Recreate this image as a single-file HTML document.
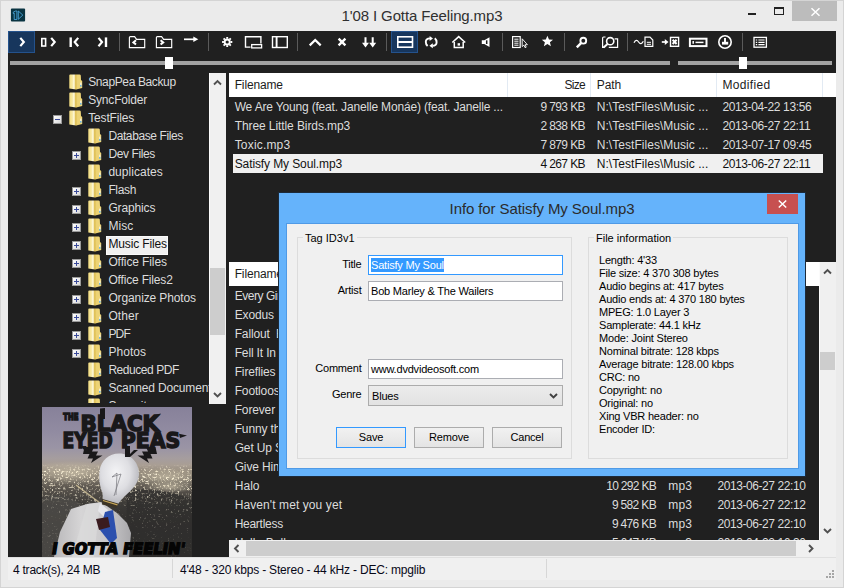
<!DOCTYPE html><html><head><meta charset="utf-8"><title>1'08 I Gotta Feeling.mp3</title><style>
*{box-sizing:border-box;margin:0;padding:0}
html,body{width:844px;height:588px;overflow:hidden;background:#ebebeb}
body{position:relative;font-family:"Liberation Sans",sans-serif;font-size:12px;color:#dcdcdc}
.abs{position:absolute}
#frame{position:absolute;left:0;top:0;width:844px;height:588px;border:1px solid #d4d4d4;background:#ebebeb}
#title{position:absolute;left:0;top:6px;width:844px;text-align:center;font-size:15px;color:#303030;letter-spacing:-0.12px;line-height:20px;white-space:pre}
#client{position:absolute;left:8px;top:31px;width:828px;height:526px;background:#202020}
.t{position:absolute;white-space:pre;line-height:16px;letter-spacing:-0.47px}
.sep{position:absolute;top:33px;width:1px;height:18px;background:#5a5a5a}
.ic{position:absolute}
.row{position:absolute;left:0;height:19px}
.hdr{position:absolute;background:#fff;color:#1a1a1a}
.hdr .t{color:#1e1e1e}
.ms{font-family:"Liberation Sans",sans-serif;font-size:11px;color:#000;letter-spacing:-0.2px}
</style></head><body>
<div id="frame"></div>
<svg class="abs" style="left:0;top:0" width="32" height="28" viewBox="0 0 32 28"><rect x="10.900" y="8.500" width="14.200" height="12.900" rx="1" fill="#0a3442"/><path d="M13.200 12.200 L15.600 11 H16.900 V19.500 H14.200 V13.100 L13.300 13.500 Z" stroke="#4fb0ea" stroke-width=".8" fill="none"/><path d="M18.300 11 L22.800 15.100 L18.300 19.300 Z" stroke="#4fb0ea" stroke-width=".8" fill="none"/></svg>
<div id="title">1'08 I Gotta Feeling.mp3</div>
<div class="abs" style="left:748px;top:13px;width:8px;height:2px;background:#222"></div>
<div class="abs" style="left:774px;top:7px;width:10px;height:8px;border:1px solid #222;border-top-width:2px"></div>
<div class="abs" style="left:792px;top:1px;width:45px;height:20px;background:#bcbcbc"></div>
<svg class="abs" style="left:809.500px;top:6.700px" width="11" height="10" viewBox="0 0 11 10"><path d="M1.500 1.200 L9.500 8.800 M9.500 1.200 L1.500 8.800" stroke="#fff" stroke-width="1.500" fill="none"/></svg>
<div id="client"></div>
<svg class="abs" width="0" height="0" style="left:0;top:0"><defs><linearGradient id="fg" x1="0" x2="1"><stop offset="0" stop-color="#f2dc80"/><stop offset=".24" stop-color="#f8eaa6"/><stop offset=".37" stop-color="#fffbe4"/><stop offset=".47" stop-color="#e2c45c"/><stop offset=".62" stop-color="#ecd273"/><stop offset="1" stop-color="#efd679"/></linearGradient></defs></svg>
<div class="abs" style="left:8px;top:31px;width:27px;height:22px;background:#17365d;border:1px solid #24528c"></div>
<div class="abs" style="left:391px;top:31px;width:27px;height:22px;background:#17365d;border:1px solid #24528c"></div>
<div class="sep" style="left:119.2px"></div>
<div class="sep" style="left:208px"></div>
<div class="sep" style="left:297px"></div>
<div class="sep" style="left:386px"></div>
<div class="sep" style="left:502.3px"></div>
<div class="sep" style="left:564px"></div>
<div class="sep" style="left:626.5px"></div>
<div class="sep" style="left:742px"></div>
<svg class="abs" style="left:0;top:28px" width="844" height="28" viewBox="0 28 844 28" fill="none" stroke="#fff"><path d="M20.300 37.900 L23.800 42 L20.300 46.100" stroke-width="2.200"/><rect x="41.800" y="38.600" width="3.800" height="7.400" stroke-width="1.600"/><path d="M51.200 37.900 L54.700 42 L51.200 46.100" stroke-width="2.200"/><path d="M70.700 37.400 V47" stroke-width="2.400"/><path d="M78.200 37.900 L74.700 42.100 L78.200 46.300" stroke-width="2.200"/><path d="M106 37.400 V47" stroke-width="2.400"/><path d="M98.500 37.900 L102 42.100 L98.500 46.300" stroke-width="2.200"/><g transform="translate(0 0)"><path d="M129.400 47.600 V37.600 Q129.400 36.600 130.400 36.600 H134.600 L136.600 39.300 H144.700 V47.600 Z" stroke-width="1.150"/><path d="M136 40.300 L133.400 42.400 L136 44.500" stroke-width="2"/></g><g transform="translate(27 0)"><path d="M129.400 47.600 V37.600 Q129.400 36.600 130.400 36.600 H134.600 L136.600 39.300 H144.700 V47.600 Z" stroke-width="1.150"/><path d="M133.600 40.300 L136.200 42.400 L133.600 44.500" stroke-width="2"/></g><path d="M184 39.300 H194.500" stroke-width="1.700"/><path d="M193.300 36.600 L198.300 39.300 L193.300 42 Z" fill="#fff" stroke="none"/><circle cx="227.200" cy="42" r="2.550" stroke-width="1.900"/><g stroke-width="1.900"><path d="M227.200 36.900V38.700M227.200 45.300V47.100M222.100 42H223.900M230.500 42H232.300M223.600 38.400L224.900 39.700M229.500 44.300L230.800 45.600M230.800 38.400L229.500 39.700M223.600 45.600L224.900 44.300"/></g><path d="M250.500 47.100 H245.500 V36.700 H260.900 V43.500" stroke-width="1.400"/><rect x="251.700" y="44.600" width="9.900" height="3.300" stroke-width="1.300"/><rect x="272.500" y="36.700" width="14.800" height="10.800" stroke-width="1.400"/><path d="M276.600 36.700 V47.500" stroke-width="1.900"/><path d="M309.700 45.400 L315.200 40 L320.700 45.400" stroke-width="2.200"/><path d="M338.600 38.600 L345.400 45.300 M345.400 38.600 L338.600 45.300" stroke-width="2.400"/><path d="M365.500 37.200 V45 M372.700 37.200 V45" stroke-width="2"/><path d="M362 42.800 L365.500 47.500 L369 42.800 Z M369.200 42.800 L372.700 47.500 L376.200 42.800 Z" fill="#fff" stroke="none"/><rect x="397.800" y="36.800" width="14.700" height="10.400" stroke-width="1.600"/><path d="M397.800 42 H412.500" stroke-width="2"/><path d="M427.600 46 Q425.800 44.500 425.800 42 Q425.800 38.500 430 38.400" stroke-width="1.900"/><path d="M429.600 36 L433 38.500 L429.600 41 Z" fill="#fff" stroke="none"/><path d="M434.800 38.200 Q436.600 39.700 436.600 42.200 Q436.600 45.700 432.400 45.800" stroke-width="1.900"/><path d="M432.800 43.200 L429.400 45.700 L432.800 48.200 Z" fill="#fff" stroke="none"/><path d="M452.300 42.500 L458.700 36.700 L465.200 42.500" stroke-width="1.600"/><path d="M454.300 42 V47.500 H463.200 V42" stroke-width="1.500"/><rect x="457.600" y="43.200" width="2.400" height="2.400" fill="#fff" stroke="none"/><path d="M481.800 40.300 H484.300 L489.500 37.200 V47 L484.300 43.900 H481.800 Z" fill="#fff" stroke="none"/><path d="M486.700 40.300 V44" stroke="#202020" stroke-width="1.500"/><rect x="512.600" y="36.600" width="7.600" height="10.900" stroke-width="1.200"/><path d="M514.300 39.200H518.500M514.300 41.200H518.500M514.300 43.200H518.500M514.300 45.200H518.500" stroke-width="1"/><path d="M522.200 38.800 V46.600 L523.900 45.100 L525.100 47.700 L526.200 47.200 L525.100 44.700 H527.400 Z" fill="#202020" stroke-width="0.900"/><path d="M547.400 35.800 L549 39.500 L553 39.800 L549.900 42.300 L550.900 46.200 L547.400 44.100 L543.900 46.200 L544.900 42.300 L541.800 39.800 L545.800 39.500 Z" fill="#fff" stroke="none"/><circle cx="583.300" cy="40.700" r="2.900" stroke-width="1.900"/><path d="M581 43.200 L576.800 47.300" stroke-width="2.400"/><path d="M604.200 47.400 H602.600 V38 Q602.600 37 603.600 37 H605.500 M614.600 38.900 H617.600 V47.400 H608.800" stroke-width="1.200"/><circle cx="610.200" cy="41.200" r="3.600" stroke-width="1.600"/><path d="M607.500 44 L603.600 47.600" stroke-width="2"/><path d="M634 42.800 Q636.300 38.200 638.600 42 T643.300 41.200" stroke-width="1.200"/><path d="M645 46.400 V37.200 H650 L652.800 40 V46.400 Z" stroke-width="1.200"/><path d="M646.800 42.300H651M646.800 44.300H651" stroke-width="1"/><path d="M661.800 42 H666" stroke-width="1.700"/><path d="M664.800 38.900 L668.500 42 L664.800 45.100 Z" fill="#fff" stroke="none"/><rect x="670.500" y="37.400" width="8.100" height="8.900" stroke-width="1.400"/><path d="M672.600 39.700 L676.600 44 M676.600 39.700 L672.600 44" stroke-width="2"/><rect x="689.900" y="38.700" width="16.600" height="7.400" stroke-width="2"/><path d="M693.200 41 V43.800" stroke-width="1.500"/><path d="M695.500 42.400 H703.500" stroke-width="1.500"/><circle cx="725" cy="42" r="6.200" stroke-width="1.600"/><path d="M725 38 V43.500" stroke-width="1.900"/><path d="M722 41.800 H728.200 V44.600 H722 Z" fill="#fff" stroke="none"/><rect x="754" y="37.400" width="12.400" height="9.800" stroke-width="1.300"/><path d="M755.800 40H757.200M758.400 40H764.600M755.800 42.300H757.200M758.400 42.300H764.600M755.800 44.600H757.200M758.400 44.600H764.600" stroke-width="1.200"/></svg>
<div class="abs" style="left:10px;top:61px;width:660px;height:4px;background:#a2a2a2"></div>
<div class="abs" style="left:165px;top:57px;width:8px;height:12px;background:#fff"></div>
<div class="abs" style="left:678px;top:61px;width:154px;height:4px;background:#a2a2a2"></div>
<div class="abs" style="left:739px;top:57px;width:8px;height:12px;background:#fff"></div>
<div class="abs" style="left:8px;top:73px;width:201px;height:330px;overflow:hidden">
<svg class="ic" style="left:61px;top:1px" width="14" height="16" viewBox="0 0 14 16"><path d="M0.3 1.2 Q0.3 0.4 1.2 0.4 H10.5 Q11.6 0.4 11.8 1.5 L12 6 L13.2 7 V14 L7 15.6 L0.3 14.6 Z" fill="url(#fg)"/><path d="M7 1 L7.2 15.4" stroke="#d9b94f" stroke-width="0.8" opacity=".7"/><rect x="11.3" y="8.6" width="1.1" height="3.6" fill="#f7f7f7"/><rect x="11.3" y="11" width="1.1" height="1.7" fill="#3aa0e8"/></svg>
<div class="t" style="left:80.2px;top:1px;letter-spacing:-0.375px">SnapPea Backup</div>
<svg class="ic" style="left:61px;top:19px" width="14" height="16" viewBox="0 0 14 16"><path d="M0.3 1.2 Q0.3 0.4 1.2 0.4 H10.5 Q11.6 0.4 11.8 1.5 L12 6 L13.2 7 V14 L7 15.6 L0.3 14.6 Z" fill="url(#fg)"/><path d="M7 1 L7.2 15.4" stroke="#d9b94f" stroke-width="0.8" opacity=".7"/><rect x="11.3" y="8.6" width="1.1" height="3.6" fill="#f7f7f7"/><rect x="11.3" y="11" width="1.1" height="1.7" fill="#3aa0e8"/></svg>
<div class="t" style="left:80.2px;top:19px;letter-spacing:-0.17px">SyncFolder</div>
<svg class="ic" style="left:61px;top:37px" width="14" height="16" viewBox="0 0 14 16"><path d="M0.3 1.2 Q0.3 0.4 1.2 0.4 H10.5 Q11.6 0.4 11.8 1.5 L12 6 L13.2 7 V14 L7 15.6 L0.3 14.6 Z" fill="url(#fg)"/><path d="M7 1 L7.2 15.4" stroke="#d9b94f" stroke-width="0.8" opacity=".7"/><rect x="11.3" y="8.6" width="1.1" height="3.6" fill="#f7f7f7"/><rect x="11.3" y="11" width="1.1" height="1.7" fill="#3aa0e8"/></svg>
<div class="abs" style="left:45px;top:42px;width:9px;height:9px;background:linear-gradient(135deg,#fff,#d8d8d8);border:1px solid #9a9a9a"></div><div class="abs" style="left:47px;top:46px;width:5px;height:1px;background:#3a4a9a"></div>
<div class="t" style="left:80.2px;top:37px;letter-spacing:-0.16px">TestFiles</div>
<svg class="ic" style="left:80px;top:55px" width="14" height="16" viewBox="0 0 14 16"><path d="M0.3 1.2 Q0.3 0.4 1.2 0.4 H10.5 Q11.6 0.4 11.8 1.5 L12 6 L13.2 7 V14 L7 15.6 L0.3 14.6 Z" fill="url(#fg)"/><path d="M7 1 L7.2 15.4" stroke="#d9b94f" stroke-width="0.8" opacity=".7"/><rect x="11.3" y="8.6" width="1.1" height="3.6" fill="#f7f7f7"/><rect x="11.3" y="11" width="1.1" height="1.7" fill="#3aa0e8"/></svg>
<div class="t" style="left:100.4px;top:55px;letter-spacing:-0.403px">Database Files</div>
<svg class="ic" style="left:80px;top:73px" width="14" height="16" viewBox="0 0 14 16"><path d="M0.3 1.2 Q0.3 0.4 1.2 0.4 H10.5 Q11.6 0.4 11.8 1.5 L12 6 L13.2 7 V14 L7 15.6 L0.3 14.6 Z" fill="url(#fg)"/><path d="M7 1 L7.2 15.4" stroke="#d9b94f" stroke-width="0.8" opacity=".7"/><rect x="11.3" y="8.6" width="1.1" height="3.6" fill="#f7f7f7"/><rect x="11.3" y="11" width="1.1" height="1.7" fill="#3aa0e8"/></svg>
<div class="abs" style="left:64px;top:78px;width:9px;height:9px;background:linear-gradient(135deg,#fff,#d8d8d8);border:1px solid #9a9a9a"></div><div class="abs" style="left:66px;top:82px;width:5px;height:1px;background:#3a4a9a"></div><div class="abs" style="left:68px;top:80px;width:1px;height:5px;background:#3a4a9a"></div>
<div class="t" style="left:100.4px;top:73px;letter-spacing:-0.38px">Dev Files</div>
<svg class="ic" style="left:80px;top:91px" width="14" height="16" viewBox="0 0 14 16"><path d="M0.3 1.2 Q0.3 0.4 1.2 0.4 H10.5 Q11.6 0.4 11.8 1.5 L12 6 L13.2 7 V14 L7 15.6 L0.3 14.6 Z" fill="url(#fg)"/><path d="M7 1 L7.2 15.4" stroke="#d9b94f" stroke-width="0.8" opacity=".7"/><rect x="11.3" y="8.6" width="1.1" height="3.6" fill="#f7f7f7"/><rect x="11.3" y="11" width="1.1" height="1.7" fill="#3aa0e8"/></svg>
<div class="t" style="left:100.4px;top:91px;letter-spacing:0.045px">duplicates</div>
<svg class="ic" style="left:80px;top:109px" width="14" height="16" viewBox="0 0 14 16"><path d="M0.3 1.2 Q0.3 0.4 1.2 0.4 H10.5 Q11.6 0.4 11.8 1.5 L12 6 L13.2 7 V14 L7 15.6 L0.3 14.6 Z" fill="url(#fg)"/><path d="M7 1 L7.2 15.4" stroke="#d9b94f" stroke-width="0.8" opacity=".7"/><rect x="11.3" y="8.6" width="1.1" height="3.6" fill="#f7f7f7"/><rect x="11.3" y="11" width="1.1" height="1.7" fill="#3aa0e8"/></svg>
<div class="abs" style="left:64px;top:114px;width:9px;height:9px;background:linear-gradient(135deg,#fff,#d8d8d8);border:1px solid #9a9a9a"></div><div class="abs" style="left:66px;top:118px;width:5px;height:1px;background:#3a4a9a"></div><div class="abs" style="left:68px;top:116px;width:1px;height:5px;background:#3a4a9a"></div>
<div class="t" style="left:100.4px;top:109px;letter-spacing:-0.349px">Flash</div>
<svg class="ic" style="left:80px;top:127px" width="14" height="16" viewBox="0 0 14 16"><path d="M0.3 1.2 Q0.3 0.4 1.2 0.4 H10.5 Q11.6 0.4 11.8 1.5 L12 6 L13.2 7 V14 L7 15.6 L0.3 14.6 Z" fill="url(#fg)"/><path d="M7 1 L7.2 15.4" stroke="#d9b94f" stroke-width="0.8" opacity=".7"/><rect x="11.3" y="8.6" width="1.1" height="3.6" fill="#f7f7f7"/><rect x="11.3" y="11" width="1.1" height="1.7" fill="#3aa0e8"/></svg>
<div class="abs" style="left:64px;top:132px;width:9px;height:9px;background:linear-gradient(135deg,#fff,#d8d8d8);border:1px solid #9a9a9a"></div><div class="abs" style="left:66px;top:136px;width:5px;height:1px;background:#3a4a9a"></div><div class="abs" style="left:68px;top:134px;width:1px;height:5px;background:#3a4a9a"></div>
<div class="t" style="left:100.4px;top:127px;letter-spacing:-0.141px">Graphics</div>
<svg class="ic" style="left:80px;top:145px" width="14" height="16" viewBox="0 0 14 16"><path d="M0.3 1.2 Q0.3 0.4 1.2 0.4 H10.5 Q11.6 0.4 11.8 1.5 L12 6 L13.2 7 V14 L7 15.6 L0.3 14.6 Z" fill="url(#fg)"/><path d="M7 1 L7.2 15.4" stroke="#d9b94f" stroke-width="0.8" opacity=".7"/><rect x="11.3" y="8.6" width="1.1" height="3.6" fill="#f7f7f7"/><rect x="11.3" y="11" width="1.1" height="1.7" fill="#3aa0e8"/></svg>
<div class="abs" style="left:64px;top:150px;width:9px;height:9px;background:linear-gradient(135deg,#fff,#d8d8d8);border:1px solid #9a9a9a"></div><div class="abs" style="left:66px;top:154px;width:5px;height:1px;background:#3a4a9a"></div><div class="abs" style="left:68px;top:152px;width:1px;height:5px;background:#3a4a9a"></div>
<div class="t" style="left:100.4px;top:145px;letter-spacing:0.107px">Misc</div>
<svg class="ic" style="left:80px;top:163px" width="14" height="16" viewBox="0 0 14 16"><path d="M0.3 1.2 Q0.3 0.4 1.2 0.4 H10.5 Q11.6 0.4 11.8 1.5 L12 6 L13.2 7 V14 L7 15.6 L0.3 14.6 Z" fill="url(#fg)"/><path d="M7 1 L7.2 15.4" stroke="#d9b94f" stroke-width="0.8" opacity=".7"/><rect x="11.3" y="8.6" width="1.1" height="3.6" fill="#f7f7f7"/><rect x="11.3" y="11" width="1.1" height="1.7" fill="#3aa0e8"/></svg>
<div class="abs" style="left:64px;top:168px;width:9px;height:9px;background:linear-gradient(135deg,#fff,#d8d8d8);border:1px solid #9a9a9a"></div><div class="abs" style="left:66px;top:172px;width:5px;height:1px;background:#3a4a9a"></div><div class="abs" style="left:68px;top:170px;width:1px;height:5px;background:#3a4a9a"></div>
<div class="abs" style="left:98px;top:163.4px;width:62px;height:18.500px;background:#f0f0f0;border:1px solid #fafafa"></div>
<div class="t" style="left:100.4px;top:163px;color:#101010;letter-spacing:-0.138px">Music Files</div>
<svg class="ic" style="left:80px;top:181px" width="14" height="16" viewBox="0 0 14 16"><path d="M0.3 1.2 Q0.3 0.4 1.2 0.4 H10.5 Q11.6 0.4 11.8 1.5 L12 6 L13.2 7 V14 L7 15.6 L0.3 14.6 Z" fill="url(#fg)"/><path d="M7 1 L7.2 15.4" stroke="#d9b94f" stroke-width="0.8" opacity=".7"/><rect x="11.3" y="8.6" width="1.1" height="3.6" fill="#f7f7f7"/><rect x="11.3" y="11" width="1.1" height="1.7" fill="#3aa0e8"/></svg>
<div class="abs" style="left:64px;top:186px;width:9px;height:9px;background:linear-gradient(135deg,#fff,#d8d8d8);border:1px solid #9a9a9a"></div><div class="abs" style="left:66px;top:190px;width:5px;height:1px;background:#3a4a9a"></div><div class="abs" style="left:68px;top:188px;width:1px;height:5px;background:#3a4a9a"></div>
<div class="t" style="left:100.4px;top:181px;letter-spacing:-0.108px">Office Files</div>
<svg class="ic" style="left:80px;top:199px" width="14" height="16" viewBox="0 0 14 16"><path d="M0.3 1.2 Q0.3 0.4 1.2 0.4 H10.5 Q11.6 0.4 11.8 1.5 L12 6 L13.2 7 V14 L7 15.6 L0.3 14.6 Z" fill="url(#fg)"/><path d="M7 1 L7.2 15.4" stroke="#d9b94f" stroke-width="0.8" opacity=".7"/><rect x="11.3" y="8.6" width="1.1" height="3.6" fill="#f7f7f7"/><rect x="11.3" y="11" width="1.1" height="1.7" fill="#3aa0e8"/></svg>
<div class="abs" style="left:64px;top:204px;width:9px;height:9px;background:linear-gradient(135deg,#fff,#d8d8d8);border:1px solid #9a9a9a"></div><div class="abs" style="left:66px;top:208px;width:5px;height:1px;background:#3a4a9a"></div><div class="abs" style="left:68px;top:206px;width:1px;height:5px;background:#3a4a9a"></div>
<div class="t" style="left:100.4px;top:199px;letter-spacing:-0.167px">Office Files2</div>
<svg class="ic" style="left:80px;top:217px" width="14" height="16" viewBox="0 0 14 16"><path d="M0.3 1.2 Q0.3 0.4 1.2 0.4 H10.5 Q11.6 0.4 11.8 1.5 L12 6 L13.2 7 V14 L7 15.6 L0.3 14.6 Z" fill="url(#fg)"/><path d="M7 1 L7.2 15.4" stroke="#d9b94f" stroke-width="0.8" opacity=".7"/><rect x="11.3" y="8.6" width="1.1" height="3.6" fill="#f7f7f7"/><rect x="11.3" y="11" width="1.1" height="1.7" fill="#3aa0e8"/></svg>
<div class="abs" style="left:64px;top:222px;width:9px;height:9px;background:linear-gradient(135deg,#fff,#d8d8d8);border:1px solid #9a9a9a"></div><div class="abs" style="left:66px;top:226px;width:5px;height:1px;background:#3a4a9a"></div><div class="abs" style="left:68px;top:224px;width:1px;height:5px;background:#3a4a9a"></div>
<div class="t" style="left:100.4px;top:217px;letter-spacing:-0.119px">Organize Photos</div>
<svg class="ic" style="left:80px;top:235px" width="14" height="16" viewBox="0 0 14 16"><path d="M0.3 1.2 Q0.3 0.4 1.2 0.4 H10.5 Q11.6 0.4 11.8 1.5 L12 6 L13.2 7 V14 L7 15.6 L0.3 14.6 Z" fill="url(#fg)"/><path d="M7 1 L7.2 15.4" stroke="#d9b94f" stroke-width="0.8" opacity=".7"/><rect x="11.3" y="8.6" width="1.1" height="3.6" fill="#f7f7f7"/><rect x="11.3" y="11" width="1.1" height="1.7" fill="#3aa0e8"/></svg>
<div class="abs" style="left:64px;top:240px;width:9px;height:9px;background:linear-gradient(135deg,#fff,#d8d8d8);border:1px solid #9a9a9a"></div><div class="abs" style="left:66px;top:244px;width:5px;height:1px;background:#3a4a9a"></div><div class="abs" style="left:68px;top:242px;width:1px;height:5px;background:#3a4a9a"></div>
<div class="t" style="left:100.4px;top:235px;letter-spacing:0.117px">Other</div>
<svg class="ic" style="left:80px;top:253px" width="14" height="16" viewBox="0 0 14 16"><path d="M0.3 1.2 Q0.3 0.4 1.2 0.4 H10.5 Q11.6 0.4 11.8 1.5 L12 6 L13.2 7 V14 L7 15.6 L0.3 14.6 Z" fill="url(#fg)"/><path d="M7 1 L7.2 15.4" stroke="#d9b94f" stroke-width="0.8" opacity=".7"/><rect x="11.3" y="8.6" width="1.1" height="3.6" fill="#f7f7f7"/><rect x="11.3" y="11" width="1.1" height="1.7" fill="#3aa0e8"/></svg>
<div class="abs" style="left:64px;top:258px;width:9px;height:9px;background:linear-gradient(135deg,#fff,#d8d8d8);border:1px solid #9a9a9a"></div><div class="abs" style="left:66px;top:262px;width:5px;height:1px;background:#3a4a9a"></div><div class="abs" style="left:68px;top:260px;width:1px;height:5px;background:#3a4a9a"></div>
<div class="t" style="left:100.4px;top:253px;letter-spacing:-0.833px">PDF</div>
<svg class="ic" style="left:80px;top:271px" width="14" height="16" viewBox="0 0 14 16"><path d="M0.3 1.2 Q0.3 0.4 1.2 0.4 H10.5 Q11.6 0.4 11.8 1.5 L12 6 L13.2 7 V14 L7 15.6 L0.3 14.6 Z" fill="url(#fg)"/><path d="M7 1 L7.2 15.4" stroke="#d9b94f" stroke-width="0.8" opacity=".7"/><rect x="11.3" y="8.6" width="1.1" height="3.6" fill="#f7f7f7"/><rect x="11.3" y="11" width="1.1" height="1.7" fill="#3aa0e8"/></svg>
<div class="abs" style="left:64px;top:276px;width:9px;height:9px;background:linear-gradient(135deg,#fff,#d8d8d8);border:1px solid #9a9a9a"></div><div class="abs" style="left:66px;top:280px;width:5px;height:1px;background:#3a4a9a"></div><div class="abs" style="left:68px;top:278px;width:1px;height:5px;background:#3a4a9a"></div>
<div class="t" style="left:100.4px;top:271px;letter-spacing:0.057px">Photos</div>
<svg class="ic" style="left:80px;top:289px" width="14" height="16" viewBox="0 0 14 16"><path d="M0.3 1.2 Q0.3 0.4 1.2 0.4 H10.5 Q11.6 0.4 11.8 1.5 L12 6 L13.2 7 V14 L7 15.6 L0.3 14.6 Z" fill="url(#fg)"/><path d="M7 1 L7.2 15.4" stroke="#d9b94f" stroke-width="0.8" opacity=".7"/><rect x="11.3" y="8.6" width="1.1" height="3.6" fill="#f7f7f7"/><rect x="11.3" y="11" width="1.1" height="1.7" fill="#3aa0e8"/></svg>
<div class="t" style="left:100.4px;top:289px;letter-spacing:-0.452px">Reduced PDF</div>
<svg class="ic" style="left:80px;top:307px" width="14" height="16" viewBox="0 0 14 16"><path d="M0.3 1.2 Q0.3 0.4 1.2 0.4 H10.5 Q11.6 0.4 11.8 1.5 L12 6 L13.2 7 V14 L7 15.6 L0.3 14.6 Z" fill="url(#fg)"/><path d="M7 1 L7.2 15.4" stroke="#d9b94f" stroke-width="0.8" opacity=".7"/><rect x="11.3" y="8.6" width="1.1" height="3.6" fill="#f7f7f7"/><rect x="11.3" y="11" width="1.1" height="1.7" fill="#3aa0e8"/></svg>
<div class="t" style="left:100.4px;top:307px;letter-spacing:-0.147px">Scanned Documents</div>
<svg class="ic" style="left:80px;top:325px" width="14" height="16" viewBox="0 0 14 16"><path d="M0.3 1.2 Q0.3 0.4 1.2 0.4 H10.5 Q11.6 0.4 11.8 1.5 L12 6 L13.2 7 V14 L7 15.6 L0.3 14.6 Z" fill="url(#fg)"/><path d="M7 1 L7.2 15.4" stroke="#d9b94f" stroke-width="0.8" opacity=".7"/><rect x="11.3" y="8.6" width="1.1" height="3.6" fill="#f7f7f7"/><rect x="11.3" y="11" width="1.1" height="1.7" fill="#3aa0e8"/></svg>
<div class="t" style="left:100.4px;top:325px;letter-spacing:0.193px">Security</div>
</div>
<div class="abs" style="left:209px;top:73px;width:17px;height:331px;background:#f0f0f0;border-left:1px solid #fbfbfb"></div>
<div class="abs" style="left:210.300px;top:268px;width:14.700px;height:67px;background:#cdcdcd"></div>
<svg class="ic" style="left:213px;top:79px" width="9" height="8" viewBox="0 0 9 8"><path d="M1 5.5 L4.5 2 L8 5.5" stroke="#505050" stroke-width="1.900" fill="none"/></svg>
<svg class="ic" style="left:213px;top:391px" width="9" height="8" viewBox="0 0 9 8"><path d="M1 2 L4.5 5.5 L8 2" stroke="#505050" stroke-width="1.900" fill="none"/></svg>
<div id="art" class="abs" style="left:42px;top:407px;width:150px;height:150px;overflow:hidden;background:linear-gradient(#87819a 0%,#918ba1 16%,#9a94a5 27%,#a59d9f 34%,#a99e93 39%,#92887a 43%,#70695f 49%,#544f49 56%,#3b3936 65%,#302f2d 78%,#2c2b2a 100%)">
<svg class="abs" style="left:0;top:0" width="150" height="150" viewBox="0 0 150 150"><defs><filter id="nz" x="0" y="0" width="1" height="1"><feTurbulence type="fractalNoise" baseFrequency="0.42" numOctaves="2" seed="7"/><feColorMatrix values="0 0 0 0 1  0 0 0 0 .93  0 0 0 0 .74  5 5 0 0 -5.9"/><feGaussianBlur stdDeviation="0.45"/></filter><filter id="nz2" x="0" y="0" width="1" height="1"><feTurbulence type="fractalNoise" baseFrequency="0.5" numOctaves="2" seed="21"/><feColorMatrix values="0 0 0 0 1  0 0 0 0 .9  0 0 0 0 .68  4 4 0 0 -4.25"/><feGaussianBlur stdDeviation="0.5"/></filter><linearGradient id="cm2" x1="0" y1="0" x2="0" y2="1"><stop offset="0" stop-color="#fff" stop-opacity="0"/><stop offset=".2" stop-color="#fff" stop-opacity=".9"/><stop offset=".55" stop-color="#fff" stop-opacity=".6"/><stop offset="1" stop-color="#fff" stop-opacity="0"/></linearGradient><mask id="mk2"><rect x="0" y="57" width="150" height="42" fill="url(#cm2)"/></mask><linearGradient id="cm" x1="0" y1="0" x2="0" y2="1"><stop offset="0" stop-color="#fff" stop-opacity="0"/><stop offset=".08" stop-color="#fff" stop-opacity="1"/><stop offset=".3" stop-color="#fff" stop-opacity=".7"/><stop offset=".45" stop-color="#fff" stop-opacity=".32"/><stop offset=".7" stop-color="#fff" stop-opacity=".18"/><stop offset="1" stop-color="#fff" stop-opacity=".08"/></linearGradient><mask id="mk"><rect x="0" y="57" width="150" height="93" fill="url(#cm)"/></mask><radialGradient id="bulb" cx=".42" cy=".38" r=".65"><stop offset="0" stop-color="#f4f4f6"/><stop offset=".55" stop-color="#dedee2"/><stop offset="1" stop-color="#b2b2b8"/></radialGradient><radialGradient id="glowL" cx=".5" cy=".5" r=".5"><stop offset="0" stop-color="#c9bfa8" stop-opacity=".75"/><stop offset="1" stop-color="#c9bfa8" stop-opacity="0"/></radialGradient><linearGradient id="suit" x1="0" x2="1"><stop offset="0" stop-color="#b9b8ba"/><stop offset=".35" stop-color="#d6d5d6"/><stop offset=".7" stop-color="#c9c8ca"/><stop offset="1" stop-color="#a9a8ab"/></linearGradient></defs><ellipse cx="30" cy="66" rx="45" ry="12" fill="url(#glowL)"/><ellipse cx="125" cy="70" rx="40" ry="10" fill="url(#glowL)"/><ellipse cx="128" cy="80" rx="26" ry="6" fill="url(#glowL)"/><path d="M0 92 Q14 84 30 92 T48 108 L40 150 H0 Z" fill="#4b4946" opacity=".9"/><path d="M84 84 Q110 78 150 92 V150 H86 Z" fill="#302f2d" opacity=".75"/><rect x="0" y="57" width="150" height="93" filter="url(#nz)" mask="url(#mk)"/><rect x="0" y="57" width="150" height="42" filter="url(#nz2)" mask="url(#mk2)"/><path d="M34 78 L58 96" stroke="#ead9a8" stroke-width="1.300" opacity=".7"/><path d="M12 150 L18 125 L29 102 L45 97 L59 95 L75 106 L85 116 L89 126 L87 150 Z" fill="url(#suit)"/><path d="M45 97 L58 96 L52 150 H30 Z" fill="#dcdbdc" opacity=".7"/><path d="M58 96 L66 103 L62 110 L56 104 Z" fill="#e6e6ea"/><path d="M63 105 L71 103 L75 131 L69 137 L58 123 Z" fill="#2c50ae"/><path d="M54 112 L66 110 L68 120 L57 123 Z" fill="#3a1c20"/><path d="M77 46.5 C90 46.5 97.500 57 97 68 C96.500 78 88 84 80 92 L76 97 L61 93 L60.500 86 C58 80 56.500 72 57.500 64 C59 53 67 46.500 77 46.500 Z" fill="url(#bulb)"/><path d="M60.500 92 L76 96.500 L74.500 101 L60 97.500 Z" fill="#3c3426"/><path d="M61 93.500 L75.500 97.800" stroke="#c9a85a" stroke-width="1.200"/><path d="M70 70 L75 66 L74 88 M79 67 L72 89 M70 70 L79 67" stroke="#77777c" stroke-width=".7" fill="none"/><g fill="#19181a"><path d="M42.500 40 H52 L50 44.500 H56 L54 48.500 H60.500 L49 56 L51 51.500 H45.500 L47.500 47 H41 Z"/><path d="M113.500 40 H104 L106 44.500 H100 L102 48.500 H95.500 L107 56 L105 51.500 H110.500 L108.500 47 H115 Z"/><path d="M58 1.500 L63 1 V12 H58Z"/><path d="M112 8 L119 6.500 L110 16 Z"/><path d="M137 26.800 L145 28.500 L138 31 Z"/><path d="M39 39 L44 39 L47 43 L42 43 Z"/><path d="M83 39 H88 V47 L92 43 H96 L88 50 H83 Z"/></g><g font-family="'DejaVu Sans','Liberation Sans',sans-serif" font-weight="bold" fill="#19181a" stroke="#19181a" stroke-width="1.5" stroke-linejoin="miter"><text x="21.300" y="13.300" font-size="8.600" textLength="15" lengthAdjust="spacingAndGlyphs">THE</text><text x="38.600" y="23.800" font-size="21" textLength="78.500" lengthAdjust="spacingAndGlyphs">BLACK</text><text x="20.600" y="41.200" font-size="21.500" textLength="50" lengthAdjust="spacingAndGlyphs">EYED</text><text x="78.800" y="41.200" font-size="21.500" textLength="59.500" lengthAdjust="spacingAndGlyphs">PEAS</text><text x="9.500" y="147" font-size="15.500" fill="#050505" stroke="#050505" textLength="133" lengthAdjust="spacingAndGlyphs" transform="skewX(-9) translate(23 0)">I GOTTA FEELIN'</text></g></svg>
</div>
<div class="hdr" style="left:229px;top:73px;width:607px;height:24px"></div>
<div class="abs" style="left:507px;top:73px;width:1px;height:24px;background:#e2eaf3"></div>
<div class="abs" style="left:590px;top:73px;width:1px;height:24px;background:#e2eaf3"></div>
<div class="abs" style="left:716px;top:73px;width:1px;height:24px;background:#e2eaf3"></div>
<div class="abs" style="left:822px;top:73px;width:1px;height:24px;background:#e2eaf3"></div>
<div class="t" style="left:234.7px;top:77px;color:#1c1c1c;letter-spacing:-0.145px;">Filename</div>
<div class="t" style="right:259px;top:77px;color:#1c1c1c;letter-spacing:-0.711px;">Size</div>
<div class="t" style="left:596.8px;top:77px;color:#1c1c1c;letter-spacing:-0.122px;">Path</div>
<div class="t" style="left:722.4px;top:77px;color:#1c1c1c;letter-spacing:0.355px;">Modified</div>
<div class="t" style="left:234.7px;top:99px;letter-spacing:-0.172px;">We Are Young (feat. Janelle Monáe) (feat. Janelle ...</div>
<div class="t" style="right:259px;top:99px;letter-spacing:-0.597px;">9 793 KB</div>
<div class="t" style="left:596.8px;top:99px;letter-spacing:0.037px;">N:\TestFiles\Music ...</div>
<div class="t" style="left:722.4px;top:99px;letter-spacing:-0.366px;">2013-04-22 13:56</div>
<div class="t" style="left:234.7px;top:118px;letter-spacing:-0.086px;">Three Little Birds.mp3</div>
<div class="t" style="right:259px;top:118px;letter-spacing:-0.597px;">2 838 KB</div>
<div class="t" style="left:596.8px;top:118px;letter-spacing:0.037px;">N:\TestFiles\Music ...</div>
<div class="t" style="left:722.4px;top:118px;letter-spacing:-0.372px;">2013-06-27 22:11</div>
<div class="t" style="left:234.7px;top:137px;letter-spacing:0.174px;">Toxic.mp3</div>
<div class="t" style="right:259px;top:137px;letter-spacing:-0.597px;">7 879 KB</div>
<div class="t" style="left:596.8px;top:137px;letter-spacing:0.037px;">N:\TestFiles\Music ...</div>
<div class="t" style="left:722.4px;top:137px;letter-spacing:-0.366px;">2013-07-17 09:45</div>
<div class="abs" style="left:233px;top:154px;width:590px;height:19px;background:#f0f0f0"></div>
<div class="t" style="left:234.7px;top:156px;color:#101010;letter-spacing:-0.104px;">Satisfy My Soul.mp3</div>
<div class="t" style="right:259px;top:156px;color:#101010;letter-spacing:-0.597px;">4 267 KB</div>
<div class="t" style="left:596.8px;top:156px;color:#101010;letter-spacing:0.037px;">N:\TestFiles\Music ...</div>
<div class="t" style="left:722.4px;top:156px;color:#101010;letter-spacing:-0.372px;">2013-06-27 22:11</div>
<div class="hdr" style="left:229px;top:262px;width:590px;height:24px"></div>
<div class="t" style="left:234.7px;top:266px;color:#1c1c1c;letter-spacing:-0.145px;">Filename</div>
<div class="abs" style="left:0;top:0;width:819px;height:540px;overflow:hidden">
<div class="t" style="left:234.7px;top:288px;letter-spacing:-0.452px;">Every Girl</div>
<div class="t" style="left:234.7px;top:307px;letter-spacing:-0.15px;">Exodus</div>
<div class="t" style="left:234.7px;top:326px;letter-spacing:-0.15px;">Fallout  Boy</div>
<div class="t" style="left:234.7px;top:345px;letter-spacing:-0.15px;">Fell It In The Air</div>
<div class="t" style="left:234.7px;top:364px;letter-spacing:-0.15px;">Fireflies</div>
<div class="t" style="left:234.7px;top:383px;letter-spacing:-0.15px;">Footloose</div>
<div class="t" style="left:234.7px;top:402px;letter-spacing:-0.15px;">Forever</div>
<div class="t" style="left:234.7px;top:421px;letter-spacing:-0.15px;">Funny the way it is</div>
<div class="t" style="left:234.7px;top:440px;letter-spacing:-0.15px;">Get Up Stand Up</div>
<div class="t" style="left:234.7px;top:459px;letter-spacing:-0.15px;">Give Him Something</div>
<div class="t" style="left:234.7px;top:478px;letter-spacing:0.053px;">Halo</div>
<div class="t" style="right:163px;top:478px;letter-spacing:-0.705px;">10 292 KB</div>
<div class="t" style="left:668.3px;top:478px;letter-spacing:0.152px;">mp3</div>
<div class="t" style="left:717.5px;top:478px;letter-spacing:-0.428px;">2013-06-27 22:10</div>
<div class="t" style="left:234.7px;top:497px;letter-spacing:0.09px;">Haven't met you yet</div>
<div class="t" style="right:163px;top:497px;letter-spacing:-0.659px;">9 582 KB</div>
<div class="t" style="left:668.3px;top:497px;letter-spacing:0.152px;">mp3</div>
<div class="t" style="left:717.5px;top:497px;letter-spacing:-0.428px;">2013-06-27 22:12</div>
<div class="t" style="left:234.7px;top:516px;letter-spacing:-0.276px;">Heartless</div>
<div class="t" style="right:163px;top:516px;letter-spacing:-0.659px;">9 476 KB</div>
<div class="t" style="left:668.3px;top:516px;letter-spacing:0.152px;">mp3</div>
<div class="t" style="left:717.5px;top:516px;letter-spacing:-0.428px;">2013-06-27 22:10</div>
<div class="t" style="left:234.7px;top:535px;letter-spacing:0.048px;">Hello Bella</div>
<div class="t" style="right:163px;top:535px;letter-spacing:-0.659px;">5 647 KB</div>
<div class="t" style="left:668.3px;top:535px;letter-spacing:0.152px;">mp3</div>
<div class="t" style="left:717.5px;top:535px;letter-spacing:-0.428px;">2013-04-22 16:30</div>
</div>
<div class="abs" style="left:819px;top:262px;width:17px;height:278px;background:#f0f0f0;border-left:1px solid #fbfbfb"></div>
<div class="abs" style="left:820.300px;top:352px;width:14.600px;height:18px;background:#cdcdcd"></div>
<svg class="ic" style="left:823px;top:268px" width="9" height="8" viewBox="0 0 9 8"><path d="M1 5.5 L4.5 2 L8 5.5" stroke="#505050" stroke-width="1.900" fill="none"/></svg>
<svg class="ic" style="left:823px;top:527px" width="9" height="8" viewBox="0 0 9 8"><path d="M1 2 L4.5 5.5 L8 2" stroke="#505050" stroke-width="1.900" fill="none"/></svg>
<div class="abs" style="left:229px;top:540px;width:607px;height:17px;background:#f0f0f0"></div>
<div class="abs" style="left:246px;top:541px;width:550px;height:15px;background:#cdcdcd"></div>
<svg class="ic" style="left:233px;top:544px" width="8" height="9" viewBox="0 0 8 9"><path d="M5.5 1 L2 4.5 L5.5 8" stroke="#505050" stroke-width="1.900" fill="none"/></svg>
<svg class="ic" style="left:807px;top:544px" width="8" height="9" viewBox="0 0 8 9"><path d="M2 1 L5.5 4.5 L2 8" stroke="#505050" stroke-width="1.900" fill="none"/></svg>
<div class="abs" style="left:8px;top:557px;width:828px;height:23px;background:#f0f0f0;border-top:1px solid #e0e0e0"></div>
<div class="abs" style="left:172px;top:559px;width:1px;height:19px;background:#d7d7d7"></div>
<div class="abs" style="left:546px;top:559px;width:1px;height:19px;background:#d7d7d7"></div>
<div class="t" style="left:13px;top:561.5px;color:#080818;letter-spacing:-0.239px;">4 track(s), 24 MB</div>
<div class="t" style="left:180px;top:561.5px;color:#080818;letter-spacing:-0.179px;">4'48 - 320 kbps - Stereo - 44 kHz - DEC: mpglib</div>
<svg class="ic" style="left:826px;top:570px" width="8" height="8" viewBox="0 0 8 8" ><rect x="6" y="0" width="2" height="2" fill="#a6a6a6"/><rect x="3" y="3" width="2" height="2" fill="#a6a6a6"/><rect x="6" y="3" width="2" height="2" fill="#a6a6a6"/><rect x="0" y="6" width="2" height="2" fill="#a6a6a6"/><rect x="3" y="6" width="2" height="2" fill="#a6a6a6"/><rect x="6" y="6" width="2" height="2" fill="#a6a6a6"/></svg>
<div class="abs" style="left:278px;top:192px;width:528px;height:285px;background:#65b3fb;border:1px solid #1c2a3a"></div>
<div class="abs" style="left:286px;top:223px;width:513px;height:246px;background:#f0f0f0;border:1px solid #4f9ae6"></div>
<div class="abs" style="left:279px;top:198.700px;width:526px;text-align:center;font-size:15px;line-height:20px;color:#2b2b2b;white-space:pre;letter-spacing:-0.1px">Info for Satisfy My Soul.mp3</div>
<div class="abs" style="left:767px;top:194px;width:31px;height:20px;background:#c75050"></div>
<svg class="ic" style="left:777px;top:199.3px" width="11" height="10" viewBox="0 0 11 10" ><path d="M1.800 1.500 L9.200 8.500 M9.200 1.500 L1.800 8.500" stroke="#fff" stroke-width="1.500" fill="none"/></svg>
<div class="abs" style="left:297px;top:237px;width:275px;height:222px;border:1px solid #dcdcdc"></div>
<div class="abs ms" style="left:303px;top:231px;padding:0 2px;background:#f0f0f0;line-height:14px;white-space:pre;letter-spacing:0">Tag ID3v1</div>
<div class="abs" style="left:588px;top:237px;width:200px;height:222px;border:1px solid #dcdcdc"></div>
<div class="abs ms" style="left:594px;top:231px;padding:0 2px;background:#f0f0f0;line-height:14px;white-space:pre;letter-spacing:0">File information</div>
<div class="abs ms" style="right:482.5px;top:257px;line-height:14px;white-space:pre;">Title</div>
<div class="abs ms" style="right:482.5px;top:283px;line-height:14px;white-space:pre;">Artist</div>
<div class="abs ms" style="right:482.5px;top:361px;line-height:14px;white-space:pre;">Comment</div>
<div class="abs ms" style="right:482.5px;top:387px;line-height:14px;white-space:pre;">Genre</div>
<div class="abs" style="left:368px;top:255px;width:195px;height:20px;background:#fff;border:1px solid #3399ff"></div>
<div class="abs" style="left:371px;top:258px;width:73px;height:14px;background:#3399ff"></div>
<div class="abs ms" style="left:371px;top:258px;line-height:14px;white-space:pre;color:#fff">Satisfy My Soul</div>
<div class="abs" style="left:368px;top:281px;width:195px;height:20px;background:#fff;border:1px solid #abadb3"></div>
<div class="abs ms" style="left:371px;top:284px;line-height:14px;white-space:pre;">Bob Marley &amp; The Wailers</div>
<div class="abs" style="left:368px;top:359px;width:195px;height:20px;background:#fff;border:1px solid #abadb3"></div>
<div class="abs ms" style="left:371px;top:362px;line-height:14px;white-space:pre;">www.dvdvideosoft.com</div>
<div class="abs" style="left:368px;top:385px;width:195px;height:21px;background:linear-gradient(#ececec,#e2e2e2);border:1px solid #acacac"></div>
<div class="abs ms" style="left:372px;top:389px;line-height:14px;white-space:pre;">Blues</div>
<svg class="ic" style="left:549px;top:392px" width="9" height="8" viewBox="0 0 9 8"><path d="M1 2 L4.5 5.5 L8 2" stroke="#404040" stroke-width="1.900" fill="none"/></svg>
<div class="abs ms" style="left:336px;top:427px;width:70px;height:21px;background:linear-gradient(#f1f1f1,#e4e4e4);border:1px solid #3399ff;text-align:center;line-height:19px">Save</div>
<div class="abs ms" style="left:414px;top:427px;width:70px;height:21px;background:linear-gradient(#f1f1f1,#e4e4e4);border:1px solid #acacac;text-align:center;line-height:19px">Remove</div>
<div class="abs ms" style="left:492px;top:427px;width:70px;height:21px;background:linear-gradient(#f1f1f1,#e4e4e4);border:1px solid #acacac;text-align:center;line-height:19px">Cancel</div>
<div class="abs ms" style="left:599px;top:253px;line-height:14px;white-space:pre;">Length: 4'33</div>
<div class="abs ms" style="left:599px;top:266px;line-height:14px;white-space:pre;">File size: 4 370 308 bytes</div>
<div class="abs ms" style="left:599px;top:279px;line-height:14px;white-space:pre;">Audio begins at: 417 bytes</div>
<div class="abs ms" style="left:599px;top:292px;line-height:14px;white-space:pre;">Audio ends at: 4 370 180 bytes</div>
<div class="abs ms" style="left:599px;top:305px;line-height:14px;white-space:pre;">MPEG: 1.0 Layer 3</div>
<div class="abs ms" style="left:599px;top:318px;line-height:14px;white-space:pre;">Samplerate: 44.1 kHz</div>
<div class="abs ms" style="left:599px;top:331px;line-height:14px;white-space:pre;">Mode: Joint Stereo</div>
<div class="abs ms" style="left:599px;top:344px;line-height:14px;white-space:pre;">Nominal bitrate: 128 kbps</div>
<div class="abs ms" style="left:599px;top:357px;line-height:14px;white-space:pre;">Average bitrate: 128.00 kbps</div>
<div class="abs ms" style="left:599px;top:370px;line-height:14px;white-space:pre;">CRC: no</div>
<div class="abs ms" style="left:599px;top:383px;line-height:14px;white-space:pre;">Copyright: no</div>
<div class="abs ms" style="left:599px;top:396px;line-height:14px;white-space:pre;">Original: no</div>
<div class="abs ms" style="left:599px;top:409px;line-height:14px;white-space:pre;">Xing VBR header: no</div>
<div class="abs ms" style="left:599px;top:422px;line-height:14px;white-space:pre;">Encoder ID:</div>
</body></html>
